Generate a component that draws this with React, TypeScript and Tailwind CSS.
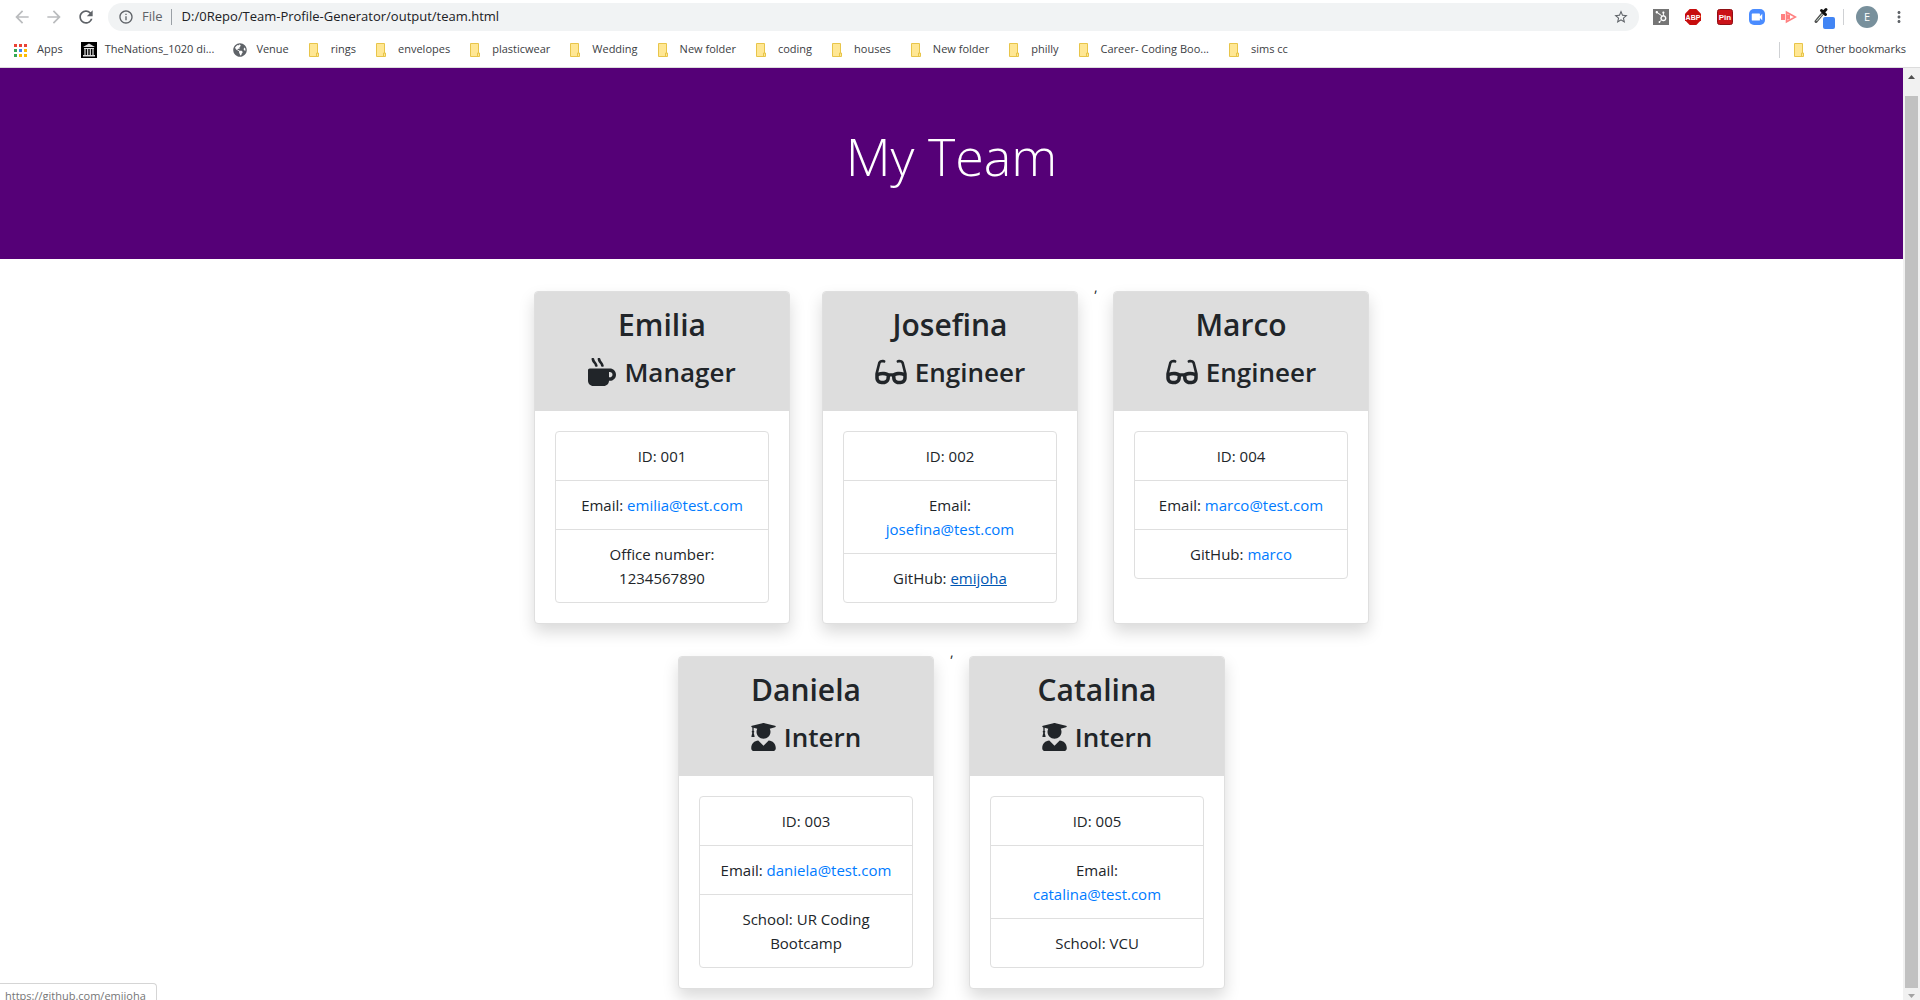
import type { ReactNode } from "react";
import { FaGlasses, FaGlobeAmericas, FaHubspot, FaMugHot, FaUserGraduate } from "react-icons/fa";
import {
  MdArrowBack,
  MdArrowForward,
  MdInfoOutline,
  MdMoreVert,
  MdRefresh,
  MdStarBorder,
  MdVideocam,
} from "react-icons/md";

type Role = "Manager" | "Engineer" | "Intern";

type Member = {
  name: string;
  role: Role;
  id: string;
  email: string;
  label: string;
  value: string;
  github?: boolean;
  hovered?: boolean;
};

const team: Member[] = [
  { name: "Emilia", role: "Manager", id: "001", email: "emilia@test.com", label: "Office number", value: "1234567890" },
  { name: "Josefina", role: "Engineer", id: "002", email: "josefina@test.com", label: "GitHub", value: "emijoha", github: true, hovered: true },
  { name: "Marco", role: "Engineer", id: "004", email: "marco@test.com", label: "GitHub", value: "marco", github: true },
  { name: "Daniela", role: "Intern", id: "003", email: "daniela@test.com", label: "School", value: "UR Coding Bootcamp" },
  { name: "Catalina", role: "Intern", id: "005", email: "catalina@test.com", label: "School", value: "VCU" },
];

const folders = [
  "rings",
  "envelopes",
  "plasticwear",
  "Wedding",
  "New folder",
  "coding",
  "houses",
  "New folder",
  "philly",
  "Career- Coding Boo...",
  "sims cc",
];

function RoleIcon({ role }: { role: Role }) {
  if (role === "Manager") return <FaMugHot className="h-7 w-7" />;
  if (role === "Engineer") return <FaGlasses className="h-7 w-8" />;
  return <FaUserGraduate className="h-7 w-[25px]" />;
}

function FolderIcon() {
  return (
    <svg viewBox="0 0 16 16" className="h-4 w-4 shrink-0" aria-hidden="true">
      <path d="M2.500 1.500h8v9.500h1v3.500h-9z" fill="#ffe794" stroke="#e8c54a" />
      <path d="M9.500 14v-3h1.500" fill="none" stroke="#e8c54a" />
    </svg>
  );
}

function AppsIcon() {
  const colors = ["#ea4335", "#ea4335", "#ea4335", "#34a853", "#4285f4", "#fbbc04", "#34a853", "#fbbc04", "#fbbc04"];
  return (
    <svg viewBox="0 0 16 16" className="h-4 w-4 shrink-0" aria-hidden="true">
      {colors.map((c, i) => (
        <rect key={i} x={1 + (i % 3) * 5} y={2 + Math.floor(i / 3) * 5} width="3" height="3" fill={c} />
      ))}
    </svg>
  );
}

function MuseumIcon() {
  return (
    <svg viewBox="0 0 16 16" className="h-4 w-4 shrink-0" aria-hidden="true">
      <rect width="16" height="16" fill="#000" />
      <path d="M8 1.500 14 5H2zM3 6h10v1H3zM2 13h12v1.500H2z" fill="#ddd" />
      <path d="M4 7v6M6.700 7v6M9.300 7v6M12 7v6" stroke="#ddd" strokeWidth="1.200" />
    </svg>
  );
}

function Bookmark({ icon, children }: { icon: ReactNode; children: ReactNode }) {
  return (
    <a href="#" className="flex shrink-0 items-center gap-2 whitespace-nowrap">
      {icon}
      {children}
    </a>
  );
}

function Extensions() {
  return (
    <div className="flex items-center gap-4">
      <button aria-label="HubSpot" className="flex h-4 w-4 items-center justify-center bg-[#757575] text-white">
        <FaHubspot className="h-3 w-3" />
      </button>
      <button aria-label="AdBlock Plus" className="h-4 w-4">
        <svg viewBox="0 0 16 16" className="h-4 w-4">
          <path d="M4.700 0h6.600L16 4.700v6.600L11.300 16H4.700L0 11.300V4.700z" fill="#c70d0d" />
          <text x="8" y="10.800" textAnchor="middle" fontFamily="Liberation Sans" fontWeight="700" fontSize="7" fill="#fff">
            ABP
          </text>
        </svg>
      </button>
      <button aria-label="Pin" className="h-4 w-4">
        <svg viewBox="0 0 16 16" className="h-4 w-4">
          <rect x=".5" y=".5" width="15" height="15" rx="2" fill="#cb1218" stroke="#8f1014" />
          <text x="8" y="11" textAnchor="middle" fontFamily="Liberation Sans" fontWeight="700" fontSize="8" fill="#fff">
            Pin
          </text>
        </svg>
      </button>
      <button aria-label="Zoom" className="flex h-4 w-4 items-center justify-center rounded-[5px] bg-[#4a8cff] text-white">
        <MdVideocam className="h-3.5 w-3.5" />
      </button>
      <button aria-label="Screen recorder" className="h-4 w-4">
        <svg viewBox="0 0 16 16" className="h-4 w-4">
          <path d="M0 5h4v6H0z" fill="#ff8080" />
          <path d="M5.500 3.200v9.600L14.500 8z" fill="#fff" stroke="#ff8080" strokeWidth="1.600" />
          <path d="M5 5.500h4v5H5z" fill="#ff8080" />
        </svg>
      </button>
      <button aria-label="Color picker" className="h-5 w-[22px]">
        <svg viewBox="0 0 22 20" className="h-5 w-[22px] overflow-visible">
          <path d="M3 14.500 10 6" stroke="#555" strokeWidth="3" strokeLinecap="round" />
          <path d="M3.500 14 9.500 7" stroke="#cfe3d6" strokeWidth="1" />
          <path d="M8.500 3.500 12.500 7.500M11 4.500 13 2.500" stroke="#111" strokeWidth="3" strokeLinecap="round" />
          <rect x="10" y="10" width="12" height="12" rx="2" fill="#4285f4" />
        </svg>
      </button>
    </div>
  );
}

function BrowserChrome() {
  return (
    <header className="shrink-0 border-b border-[#dcdcdc] bg-white text-[#3c4043]">
      <div className="flex h-[34px] items-center pr-3 pl-3">
        <div className="flex items-center gap-3 text-[#5f6368]">
          <button aria-label="Back" className="text-[#babcbe]">
            <MdArrowBack className="h-5 w-5" />
          </button>
          <button aria-label="Forward" className="text-[#babcbe]">
            <MdArrowForward className="h-5 w-5" />
          </button>
          <button aria-label="Reload">
            <MdRefresh className="h-5 w-5" />
          </button>
        </div>
        <div className="ml-3 flex h-7 flex-1 items-center rounded-full bg-[#f1f3f4] pr-2.5 pl-2.5 text-[13px]">
          <MdInfoOutline className="h-4 w-4 text-[#5f6368]" />
          <span className="ml-2 text-[#5f6368]">File</span>
          <span className="mr-2.5 ml-2 h-4 w-px bg-[#9aa0a6]" />
          <input
            aria-label="Address"
            defaultValue="D:/0Repo/Team-Profile-Generator/output/team.html"
            className="min-w-0 flex-1 bg-transparent text-[#202124] outline-none"
          />
          <button aria-label="Bookmark this page">
            <MdStarBorder className="h-4 w-4 text-[#5f6368]" />
          </button>
        </div>
        <div className="ml-3.5 flex items-center">
          <Extensions />
          <span className="mx-2 h-4 w-px bg-[#cfd1d4]" />
          <button className="ml-1 h-[22px] w-[22px] rounded-full bg-[#78909c] text-center text-[11px] text-white">E</button>
          <button aria-label="Menu" className="ml-3">
            <MdMoreVert className="h-[18px] w-[18px] text-[#5f6368]" />
          </button>
        </div>
      </div>
      <nav className="flex h-[33px] items-center gap-[18px] pr-3.5 pb-0.5 pl-[13px] text-[11px]">
        <Bookmark icon={<AppsIcon />}>Apps</Bookmark>
        <Bookmark icon={<MuseumIcon />}>TheNations_1020 di...</Bookmark>
        <Bookmark icon={<FaGlobeAmericas className="h-3.5 w-4 text-[#5f6368]" />}>Venue</Bookmark>
        {folders.map((name, i) => (
          <Bookmark key={i} icon={<FolderIcon />}>
            {name}
          </Bookmark>
        ))}
        <div className="ml-auto flex items-center gap-3">
          <span className="h-4 w-px bg-[#cfd1d4]" />
          <Bookmark icon={<FolderIcon />}>Other bookmarks</Bookmark>
        </div>
      </nav>
    </header>
  );
}

function MemberCard({ member }: { member: Member }) {
  const linkClass = member.hovered ? "text-[#0056b3] underline" : "text-[#007bff]";
  return (
    <article className="m-4 w-64 rounded border border-[#dfdfdf] bg-white shadow-[0_8px_16px_rgba(0,0,0,0.15)]">
      <div className="h-[119px] rounded-t-[3px] bg-[#ddd] pt-3.5 text-center font-semibold">
        <h2 className="text-[30px] leading-[38px]">{member.name}</h2>
        <h3 className="mt-2 flex items-center justify-center gap-2 text-[26px] leading-10">
          <RoleIcon role={member.role} />
          {member.role}
        </h3>
      </div>
      <div className="p-5">
        <ul className="divide-y divide-[#dfdfdf] rounded border border-[#dfdfdf] text-center text-[15px] leading-6">
          <li className="px-5 py-3">ID: {member.id}</li>
          <li className="px-5 py-3">
            Email:{" "}
            <a href={`mailto:${member.email}`} className="text-[#007bff]">
              {member.email}
            </a>
          </li>
          <li className="px-5 py-3">
            {member.label}:{" "}
            {member.github ? (
              <a href={`https://github.com/${member.value}`} className={linkClass}>
                {member.value}
              </a>
            ) : (
              member.value
            )}
          </li>
        </ul>
      </div>
    </article>
  );
}

function Scrollbar() {
  return (
    <div className="flex w-[17px] shrink-0 flex-col items-center bg-[#f1f1f1]">
      <svg viewBox="0 0 17 28" className="h-7 w-[17px] shrink-0">
        <path d="M5 11h7L8.500 7z" fill="#505050" />
      </svg>
      <div className="w-[13px] flex-1 bg-[#c1c1c1]" />
      <svg viewBox="0 0 17 12" className="h-3 w-[17px] shrink-0">
        <path d="M5 6h7L8.500 10z" fill="#a3a3a3" />
      </svg>
    </div>
  );
}

export default function App() {
  return (
    <div className="flex h-screen flex-col overflow-hidden bg-white font-['Open_Sans','Noto_Sans',sans-serif] text-[#212529]">
      <BrowserChrome />
      <div className="relative flex min-h-0 flex-1">
        <main className="min-w-0 flex-1 overflow-hidden">
          <div className="bg-[#550077] pt-[54px] pb-[69px] text-center text-white">
            <h1 className="text-[52px] leading-[68px] font-light">My Team</h1>
          </div>
          <div className="mx-auto flex max-w-[1140px] flex-wrap justify-center pt-4">
            <MemberCard member={team[0]} />
            <MemberCard member={team[1]} />
            <span className="w-[3px] text-sm leading-6">,</span>
            <MemberCard member={team[2]} />
            <MemberCard member={team[3]} />
            <span className="w-[3px] text-sm leading-6">,</span>
            <MemberCard member={team[4]} />
          </div>
        </main>
        <Scrollbar />
        <div className="absolute bottom-0 left-0 h-[17px] overflow-hidden rounded-tr border-t border-r border-[#d5d5d5] bg-white pr-2.5 pl-[5px] text-[11px] leading-6 text-[#757575]">
          https://github.com/emijoha
        </div>
      </div>
    </div>
  );
}
